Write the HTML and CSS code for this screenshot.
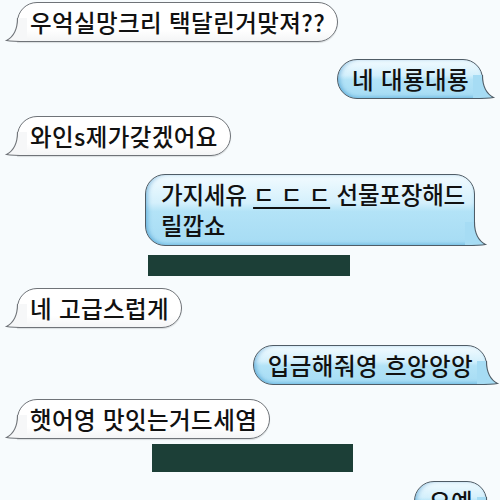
FILE: index.html
```html
<!DOCTYPE html>
<html lang="ko">
<head>
<meta charset="UTF-8" />
<meta name="viewport" content="width=device-width, initial-scale=1" />
<title>대화</title>
<link rel="stylesheet" href="styles.css">
</head>
<body>

<main class="chat">
  <div class="bubble them">
    <svg class="tail" viewBox="0 0 22 24" width="22" height="24"><path class="tail-fill" d="M12.5 0 C12.5 10 10 18 1.5 22.5 C7 23.5 12 23.5 22 23.5 L22 0 Z"/><path class="tail-line" d="M12.5 0 C12.5 10 10 18 1.5 22.5 C7 23.5 12 23.5 22 23.5"/></svg>
    <span class="txt">우억실망크리 택달린거맞져??</span>
  </div>

  <div class="bubble me gap-17 r-17">
    <svg class="tail" viewBox="0 0 22 24" width="22" height="24"><path class="tail-fill" d="M12.5 0 C12.5 10 10 18 1.5 22.5 C7 23.5 12 23.5 22 23.5 L22 0 Z"/><path class="tail-line" d="M12.5 0 C12.5 10 10 18 1.5 22.5 C7 23.5 12 23.5 22 23.5"/></svg>
    <span class="txt">네 대룡대룡</span>
  </div>

  <div class="bubble them gap-17">
    <svg class="tail" viewBox="0 0 22 24" width="22" height="24"><path class="tail-fill" d="M12.5 0 C12.5 10 10 18 1.5 22.5 C7 23.5 12 23.5 22 23.5 L22 0 Z"/><path class="tail-line" d="M12.5 0 C12.5 10 10 18 1.5 22.5 C7 23.5 12 23.5 22 23.5"/></svg>
    <span class="txt">와인s제가갖겠어요</span>
  </div>

  <div class="bubble me multi gap-18 r-25">
    <svg class="tail" viewBox="0 0 22 24" width="22" height="24"><path class="tail-fill" d="M12.5 0 C12.5 10 10 18 1.5 22.5 C7 23.5 12 23.5 22 23.5 L22 0 Z"/><path class="tail-line" d="M12.5 0 C12.5 10 10 18 1.5 22.5 C7 23.5 12 23.5 22 23.5"/></svg>
    <span class="txt">가지세유 <u>ㄷ ㄷ ㄷ</u> 선물포장해드<br>릴깝쇼</span>
  </div>

  <div class="censor bar-1"></div>

  <div class="bubble them gap-12">
    <svg class="tail" viewBox="0 0 22 24" width="22" height="24"><path class="tail-fill" d="M12.5 0 C12.5 10 10 18 1.5 22.5 C7 23.5 12 23.5 22 23.5 L22 0 Z"/><path class="tail-line" d="M12.5 0 C12.5 10 10 18 1.5 22.5 C7 23.5 12 23.5 22 23.5"/></svg>
    <span class="txt">네 고급스럽게</span>
  </div>

  <div class="bubble me gap-17 r-13">
    <svg class="tail" viewBox="0 0 22 24" width="22" height="24"><path class="tail-fill" d="M12.5 0 C12.5 10 10 18 1.5 22.5 C7 23.5 12 23.5 22 23.5 L22 0 Z"/><path class="tail-line" d="M12.5 0 C12.5 10 10 18 1.5 22.5 C7 23.5 12 23.5 22 23.5"/></svg>
    <span class="txt">입금해줘영 흐앙앙앙</span>
  </div>

  <div class="bubble them gap-14">
    <svg class="tail" viewBox="0 0 22 24" width="22" height="24"><path class="tail-fill" d="M12.5 0 C12.5 10 10 18 1.5 22.5 C7 23.5 12 23.5 22 23.5 L22 0 Z"/><path class="tail-line" d="M12.5 0 C12.5 10 10 18 1.5 22.5 C7 23.5 12 23.5 22 23.5"/></svg>
    <span class="txt">햇어영 맛잇는거드세염</span>
  </div>

  <div class="censor bar-2"></div>

  <div class="bubble me gap-9 r-13">
    <svg class="tail" viewBox="0 0 22 24" width="22" height="24"><path class="tail-fill" d="M12.5 0 C12.5 10 10 18 1.5 22.5 C7 23.5 12 23.5 22 23.5 L22 0 Z"/><path class="tail-line" d="M12.5 0 C12.5 10 10 18 1.5 22.5 C7 23.5 12 23.5 22 23.5"/></svg>
    <span class="txt">오예</span>
  </div>
</main>

</body>
</html>
```

FILE: styles.css
```css
html, body {
  margin: 0;
  height: 100%;
  overflow: hidden;
}
body {
  background: #f7fbfd;
  font-family: "Noto Sans CJK KR", "Noto Sans", sans-serif;
  color: #111;
}
.chat {
  display: flex;
  flex-direction: column;
  padding-top: 2px;
}

/* 말풍선 */
.bubble {
  position: relative;
  font-size: 23.5px;
  font-weight: 500;
  line-height: 30px;
  padding: 4px 12px;
  border: 1px solid #6f7378;
  border-radius: 20px;
  white-space: nowrap;
  letter-spacing: 0.4px;
}
.bubble .txt {
  position: relative;
}
.bubble .txt u {
  text-decoration-thickness: 2px;
  text-underline-offset: 3px;
}
.them {
  align-self: flex-start;
  margin-left: 17px;
  background: linear-gradient(#ffffff, #ffffff 70%, #f4f5f6);
  border-bottom-left-radius: 0;
  box-shadow: 0 1px 1px rgba(0,0,0,0.12);
}
.me {
  align-self: flex-end;
  padding: 4px 13px 4px 14px;
  border-color: #4f5c66;
  background: linear-gradient(#f2fbff 0%, #d4f0fc 40%, #b3e3f7 52%, #a6dcf4 100%);
  border-bottom-right-radius: 0;
  box-shadow: inset 3px 0 4px -1px rgba(50,140,200,0.45), inset 0 -2px 3px rgba(80,170,220,0.3);
}
.bubble.multi {
  line-height: 31px;
  letter-spacing: -0.2px;
  padding: 4px 9px 4px 15px;
}

/* 꼬리 */
.tail {
  position: absolute;
  bottom: -1px;
  left: -13px;
  overflow: visible;
}
.me .tail {
  left: auto;
  right: -13px;
  transform: scaleX(-1);
}
.tail-fill {
  fill: #f6f7f8;
}
.me .tail-fill {
  fill: #a6dcf4;
}
.tail-line {
  fill: none;
  stroke: #6f7378;
  stroke-width: 1.1;
}
.me .tail-line {
  stroke: #4f5c66;
}

/* 가림 막대 */
.censor {
  align-self: flex-start;
  background: #1c3f37;
}
.bar-1 {
  margin: 9px 0 0 148px;
  width: 202px;
  height: 21px;
}
.bar-2 {
  margin: 5px 0 0 152px;
  width: 201px;
  height: 28px;
}

.gap-9 { margin-top: 9px; }
.gap-12 { margin-top: 12px; }
.gap-14 { margin-top: 14px; }
.gap-17 { margin-top: 17px; }
.gap-18 { margin-top: 18px; }
.r-13 { margin-right: 13px; }
.r-17 { margin-right: 17px; }
.r-25 { margin-right: 25px; }
```
